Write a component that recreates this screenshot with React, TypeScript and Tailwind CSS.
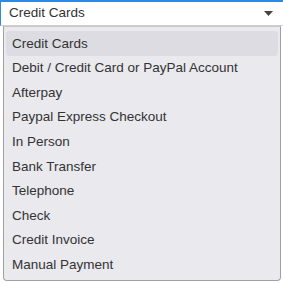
import React from "react";

const items = [
  "Credit Cards",
  "Debit / Credit Card or PayPal Account",
  "Afterpay",
  "Paypal Express Checkout",
  "In Person",
  "Bank Transfer",
  "Telephone",
  "Check",
  "Credit Invoice",
  "Manual Payment",
];

export default function App() {
  return (
    <div
      className="w-[283px] h-[283px] bg-white overflow-hidden flex flex-col"
      style={{ fontFamily: '"Liberation Sans", Arial, sans-serif' }}
    >
      <div className="h-[26px] shrink-0 border-t-2 border-l border-[#2a8ae6] border-b border-b-[#d0d0d0] flex items-center justify-between pl-[8px] pr-[10px] text-[13.5px] text-[#333]">
        <span>Credit Cards</span>
        <svg width="9" height="5" viewBox="0 0 9 5">
          <path d="M0 0 L9 0 L4.5 5 Z" fill="#444" />
        </svg>
      </div>
      <div className="ml-[3px] mr-[2px] flex-1 mb-[2px] bg-[#e9e9ee] border border-[#a0a0a0] border-t-[#c8c8c8] rounded-b-[4px] px-[2px] pt-[4px] flex flex-col">
        {items.map((t, i) => (
          <div
            key={t}
            className={`h-[24.6px] shrink-0 flex items-center pl-[6px] pt-[1px] text-[13.5px] text-[#333] rounded-[3px] ${
              i === 0 ? "bg-[#dcdce2]" : ""
            }`}
          >
            {t}
          </div>
        ))}
      </div>
    </div>
  );
}
